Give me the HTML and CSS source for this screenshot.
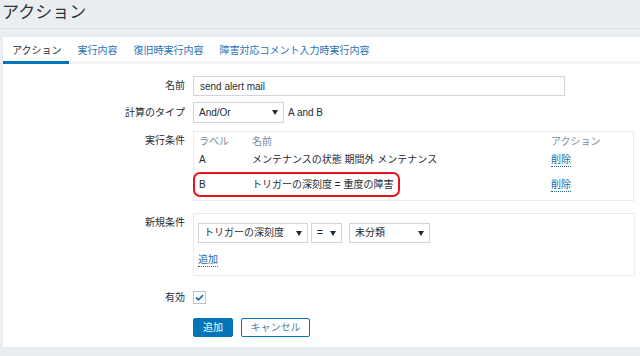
FILE: index.html
```html
<!DOCTYPE html>
<html lang="ja">
<head>
  <meta charset="UTF-8">
  <title>アクション</title>
  <link rel="stylesheet" href="styles.css">
</head>
<body>
  <header class="page-header">
    <h1>アクション</h1>
  </header>

  <main class="panel">
    <nav class="tabs">
      <a class="tab active">アクション</a>
      <a class="tab">実行内容</a>
      <a class="tab">復旧時実行内容</a>
      <a class="tab">障害対応コメント入力時実行内容</a>
    </nav>

    <form class="form">
      <div class="row row-name">
        <label class="label">名前</label>
        <div class="field"><input class="text-input" type="text" value="send alert mail"></div>
      </div>

      <div class="row row-calc">
        <label class="label">計算のタイプ</label>
        <div class="field inline">
          <div class="select select-calc">And/Or</div>
          <span class="formula">A and B</span>
        </div>
      </div>

      <div class="row row-cond">
        <label class="label">実行条件</label>
        <div class="field">
          <div class="box cond-box">
            <div class="cond-row cond-head">
              <span class="col-label">ラベル</span>
              <span class="col-name">名前</span>
              <span class="col-action">アクション</span>
            </div>
            <div class="cond-row">
              <span class="col-label">A</span>
              <span class="col-name">メンテナンスの状態 期間外 メンテナンス</span>
              <span class="col-action"><a class="link">削除</a></span>
            </div>
            <div class="cond-row cond-b">
              <span class="highlight"></span>
              <span class="col-label">B</span>
              <span class="col-name">トリガーの深刻度 = 重度の障害</span>
              <span class="col-action"><a class="link">削除</a></span>
            </div>
          </div>
        </div>
      </div>

      <div class="row row-new">
        <label class="label">新規条件</label>
        <div class="field">
          <div class="box new-box">
            <div class="inline selects">
              <div class="select select-type">トリガーの深刻度</div>
              <div class="select select-op">=</div>
              <div class="select select-val">未分類</div>
            </div>
            <a class="link add-link">追加</a>
          </div>
        </div>
      </div>

      <div class="row row-enabled">
        <label class="label">有効</label>
        <div class="field">
          <span class="checkbox">
            <svg width="9" height="7" viewBox="0 0 9 7"><path d="M1 3.5 L3.5 5.8 L8 1.2" fill="none" stroke="#1b6fb0" stroke-width="1.7"/></svg>
          </span>
        </div>
      </div>

      <div class="row row-buttons">
        <span class="label"></span>
        <div class="field inline buttons">
          <button type="button" class="btn btn-primary">追加</button>
          <button type="button" class="btn btn-alt">キャンセル</button>
        </div>
      </div>
    </form>
  </main>
</body>
</html>
```

FILE: styles.css
```css
body {
  margin: 0;
  background-color: #ebeef0;
  font-family: "Liberation Sans", Arial, "Noto Sans CJK JP", sans-serif;
  font-size: 10px;
  color: #1f2c33;
  width: 640px;
  height: 356px;
  overflow: hidden;
}

.page-header {
  height: 29px;
  border-bottom: 1px solid #dde2e5;
  padding-left: 2px;
  box-sizing: border-box;
}

.page-header h1 {
  margin: 0;
  font-size: 17px;
  font-weight: normal;
  line-height: 25px;
  color: #2b3438;
}

.panel {
  margin: 8px 0 0 3px;
  height: 310px;
  background-color: #ffffff;
}

/* tabs */
.tabs {
  display: flex;
  height: 24px;
  border-bottom: 3px solid #f3f4f5;
}

.tab {
  padding: 0 7px 0 9px;
  line-height: 27px;
  color: #2a72b5;
  border-bottom: 3px solid transparent;
  margin-bottom: -3px;
}

.tab.active {
  color: #1f2c33;
  border-bottom-color: #0275b8;
}

/* form rows */
.form {
  padding-top: 12px;
}

.row {
  display: flex;
  align-items: flex-start;
}

.label {
  width: 182px;
  text-align: right;
  padding-right: 8px;
  line-height: 20px;
  flex-shrink: 0;
}

.field {
  flex: 1;
}

.inline {
  display: flex;
  align-items: center;
}

.row-calc { margin-top: 6px; }
.row-cond { margin-top: 8px; }
.row-new { margin-top: 12px; }
.row-enabled { margin-top: 14px; }
.row-buttons { margin-top: 13px; }

.row-calc .label { line-height: 21px; }
.row-enabled .label { line-height: 15px; }

.text-input {
  display: block;
  width: 372px;
  height: 20px;
  box-sizing: border-box;
  border: 1px solid #cfd5d9;
  padding: 0 6px;
  font: inherit;
  color: #1f2c33;
}

/* select boxes with a drop arrow */
.select {
  position: relative;
  height: 20px;
  box-sizing: border-box;
  border: 1px solid #cfd5d9;
  padding: 0 5px;
  line-height: 18px;
  background-color: #ffffff;
}

.select::after {
  content: "";
  position: absolute;
  right: 5px;
  top: 7px;
  border-left: 3px solid transparent;
  border-right: 3px solid transparent;
  border-top: 5px solid #1f2c33;
}

.select-calc { width: 91px; height: 21px; line-height: 19px; }
.formula { margin-left: 4px; }

.box {
  border: 1px solid #ebebeb;
  box-sizing: border-box;
}

.cond-box {
  width: 441px;
  height: 70px;
  padding: 1px 5px 0 5px;
}

.cond-row {
  position: relative;
  display: flex;
  height: 18px;
  line-height: 18px;
}

.cond-head {
  color: #768d99;
}

.cond-b {
  margin-top: 3px;
  height: 25px;
  line-height: 25px;
}

.col-label { width: 53px; }
.col-name { width: 299px; }
.col-action { width: 60px; }

.highlight {
  position: absolute;
  left: -6px;
  top: 0;
  width: 207px;
  height: 25px;
  border: 2px solid #e8141c;
  border-radius: 7px;
  box-sizing: border-box;
}

.link {
  color: #1f65a0;
  border-bottom: 1px dotted #1f65a0;
  line-height: 13px;
  display: inline-block;
}

.new-box {
  width: 442px;
  height: 63px;
  padding: 9px 4px 0 4px;
}

.selects { gap: 3px; }
.select-type { width: 110px; }
.select-op { width: 31px; margin-right: 4px; }
.select-val { width: 81px; }

.add-link {
  margin-top: 10px;
}

.checkbox {
  display: flex;
  align-items: center;
  justify-content: center;
  width: 13px;
  height: 13px;
  margin: 1px 0 0 0;
  border: 1px solid #b8c2c8;
  box-sizing: border-box;
}

.buttons { gap: 8px; }

.btn {
  height: 19px;
  padding: 0;
  font: inherit;
  border-radius: 2px;
  box-sizing: border-box;
  line-height: 16px;
}

.btn-primary {
  width: 40px;
  background-color: #0275b8;
  border: 1px solid #0275b8;
  color: #ffffff;
}

.btn-alt {
  width: 69px;
  background-color: #ffffff;
  border: 1px solid #0275b8;
  color: #4f7ea3;
}
```
